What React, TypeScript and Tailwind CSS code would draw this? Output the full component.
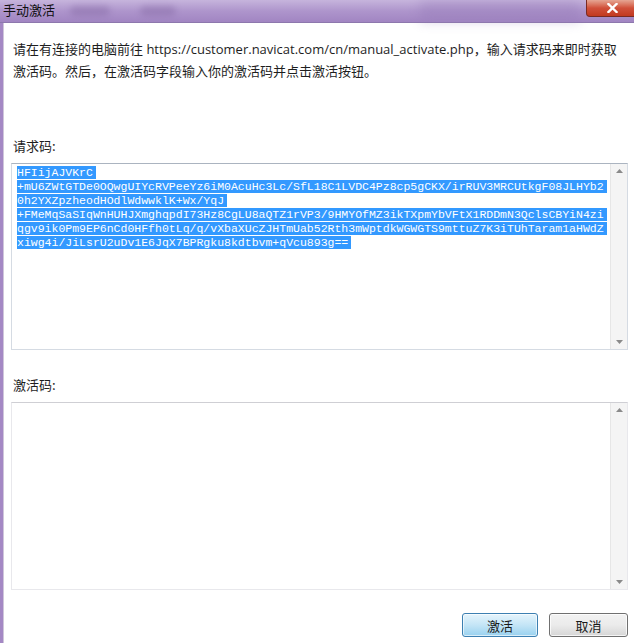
import React from "react";

const requestLines = [
  "HFIijAJVKrC",
  "+mU6ZWtGTDe0OQwgUIYcRVPeeYz6iM0AcuHc3Lc/SfL18C1LVDC4Pz8cp5gCKX/irRUV3MRCUtkgF08JLHYb2",
  "0h2YXZpzheodHOdlWdwwklK+Wx/YqJ",
  "+FMeMqSaSIqWnHUHJXmghqpdI73Hz8CgLU8aQTZ1rVP3/9HMYOfMZ3ikTXpmYbVFtX1RDDmN3QclsCBYiN4zi",
  "qgv9ik0Pm9EP6nCd0HFfh0tLq/q/vXbaXUcZJHTmUab52Rth3mWptdkWGWGTS9mttuZ7K3iTUhTaram1aHWdZ",
  "xiwg4i/JiLsrU2uDv1E6JqX7BPRgku8kdtbvm+qVcu893g==",
];

// Windows 7 style scrollbar column with the two arrow buttons
function ScrollColumn() {
  return (
    <div className="w-[17px] self-stretch bg-[#f4f4f4] border-l border-[#e6e6e6] flex flex-col justify-between items-center py-[5px]">
      <svg width="7" height="4" viewBox="0 0 7 4">
        <path d="M0 4L3.5 0L7 4Z" fill="#8a8a8a" />
      </svg>
      <svg width="7" height="4" viewBox="0 0 7 4">
        <path d="M0 0L3.5 4L7 0Z" fill="#8a8a8a" />
      </svg>
    </div>
  );
}

export default function App() {
  return (
    <div className="w-[634px] h-[643px] bg-white overflow-hidden flex flex-col font-['Segoe_UI','Open_Sans','Noto_Sans_CJK_SC',sans-serif] text-[#1e1e1e]">
      {/* Title bar */}
      <div className="relative h-[23px] shrink-0 bg-gradient-to-b from-[#c6b4dc] via-[#ae95cc] to-[#a185c2] border-b border-[#8d78ad]">
        <div className="absolute left-[70px] top-[6px] w-[40px] h-[10px] rounded-full bg-[#7e629e] opacity-40 blur-[3px]" />
        <div className="absolute left-[140px] top-[6px] w-[36px] h-[10px] rounded-full bg-[#7e629e] opacity-40 blur-[3px]" />
        <div className="absolute left-[420px] top-0 w-[160px] h-[22px] bg-[#8f74b3] opacity-30 blur-[6px]" />
        <span className="absolute left-[3px] top-[1px] text-[13px] leading-[18px] text-[#101010] font-['Noto_Sans_CJK_SC',sans-serif]">
          手动激活
        </span>
        <div className="absolute right-[-4px] top-0 w-[52px] h-[17px] rounded-bl-[4px] border border-t-0 border-[#7a2a22] bg-gradient-to-b from-[#e5a593] via-[#d0503a] to-[#c2391f] flex items-center justify-center">
          <svg width="11" height="10" viewBox="0 0 11 10">
            <path d="M1.5 1L9.5 9M9.5 1L1.5 9" stroke="white" strokeWidth="2.4" strokeLinecap="square" />
          </svg>
        </div>
      </div>

      {/* Body */}
      <div className="flex flex-1">
        <div className="w-[4px] bg-[#a488c4] border-r border-[#cfc6da]" />
        <div className="flex-1 flex flex-col pl-[7px] pr-[6px]">
          <p className="mt-[15px] pl-[2px] text-[13px] leading-[22px] font-['Open_Sans','Noto_Sans_CJK_SC',sans-serif]">
            请在有连接的电脑前往 https://customer.navicat.com/cn/manual_activate.php，输入请求码来即时获取
            <br />
            激活码。然后，在激活码字段输入你的激活码并点击激活按钮。
          </p>

          <div className="mt-[55px] pl-[2px] text-[13px] leading-[18px] font-['Noto_Sans_CJK_SC',sans-serif]">请求码:</div>
          <div className="mt-[8px] h-[187px] flex border border-[#d5dbe3] border-t-[#abb4c0]">
            <div className="flex-1 pt-[2px] pl-[5px] font-['Liberation_Mono',monospace] text-[11.5px] leading-[14px]">
              {requestLines.map((line, i) => (
                <div key={i} className="whitespace-pre">
                  <span className="bg-[#3399ff] text-white pr-[3px]">{line}</span>
                </div>
              ))}
            </div>
            <ScrollColumn />
          </div>

          <div className="mt-[26px] pl-[2px] text-[13px] leading-[18px] font-['Noto_Sans_CJK_SC',sans-serif]">激活码:</div>
          <div className="mt-[8px] h-[188px] flex border border-[#e8e8ec] border-t-[#cfcfd4]">
            <div className="flex-1" />
            <ScrollColumn />
          </div>

          <div className="mt-[23px] flex justify-end gap-[11px]">
            <button className="w-[76px] h-[24px] rounded-[3px] border border-[#3c7fb1] bg-gradient-to-b from-[#e5f4fc] via-[#c4e5f6] to-[#98d1ef] text-[13px] leading-none text-[#1a1a1a] font-['Noto_Sans_CJK_SC',sans-serif] shadow-[inset_0_0_0_1px_#ffffffa0]">
              激活
            </button>
            <button className="w-[79px] h-[24px] rounded-[3px] border border-[#707070] bg-gradient-to-b from-[#f2f2f2] via-[#ebebeb] to-[#d6d6d6] text-[13px] leading-none text-[#1a1a1a] font-['Noto_Sans_CJK_SC',sans-serif] shadow-[inset_0_0_0_1px_#ffffffc0]">
              取消
            </button>
          </div>
        </div>
      </div>
    </div>
  );
}
